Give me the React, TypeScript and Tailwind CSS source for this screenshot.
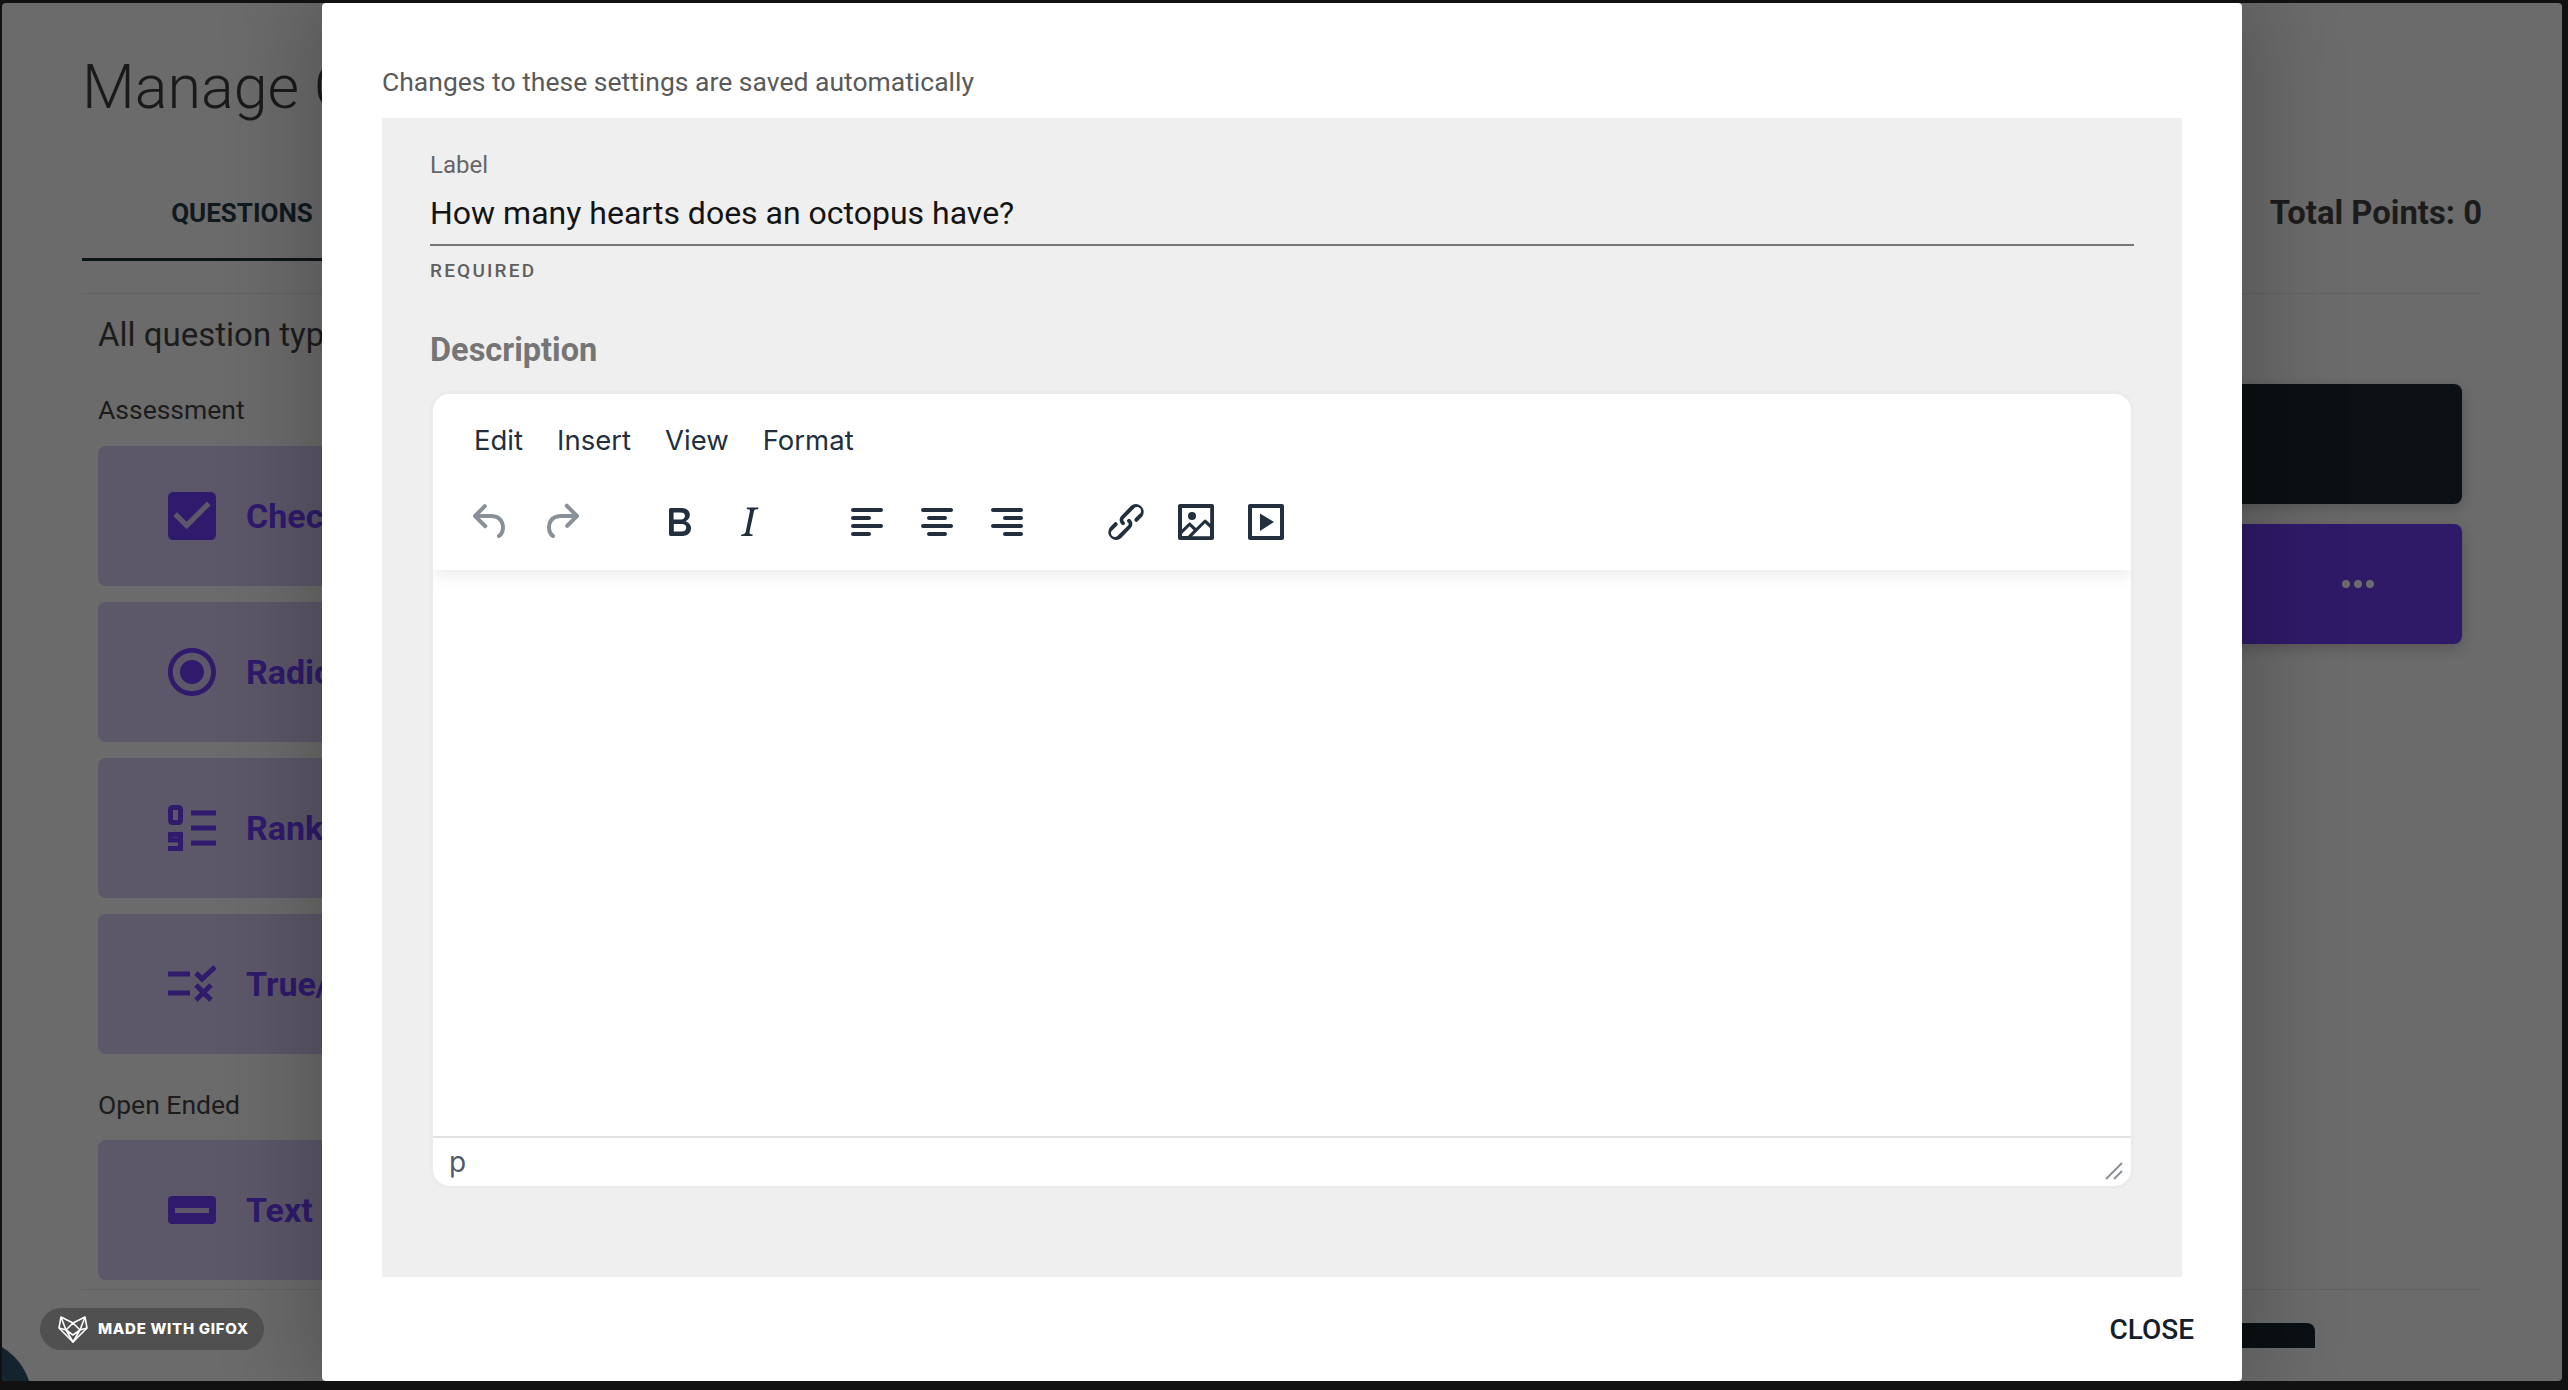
const questionCard = "flex h-[140px] items-center gap-[30px] rounded-lg bg-[#5c5769] pl-[70px]";
const cardLabel = "text-[34px] font-bold text-[#2f1a6c]";

function TinyIcon({ d, className = "" }: { d: string; className?: string }) {
  return (
    <span className={`flex w-[70px] justify-center ${className}`}>
      <svg viewBox="0 0 24 24" className="h-12 w-12 fill-current">
        <path d={d} />
      </svg>
    </span>
  );
}

const icons = {
  undo: "M6.4 8H12c3.7 0 6.2 2 6.8 5.1.6 2.7-.4 5.6-2.3 6.8a1 1 0 0 1-1-1.8c1.1-.6 1.8-2.7 1.4-4.6-.5-2.1-2.1-3.5-4.9-3.5H6.4l3.3 3.3a1 1 0 1 1-1.4 1.4l-5-5a1 1 0 0 1 0-1.4l5-5a1 1 0 0 1 1.4 1.4L6.4 8Z",
  redo: "M17.6 10H12c-2.8 0-4.4 1.4-4.9 3.5-.4 2 .3 4 1.4 4.6a1 1 0 1 1-1 1.8c-2-1.2-2.9-4.1-2.3-6.8.6-3 3-5.1 6.8-5.1h5.6l-3.3-3.3a1 1 0 1 1 1.4-1.4l5 5a1 1 0 0 1 0 1.4l-5 5a1 1 0 0 1-1.4-1.4l3.3-3.3Z",
  bold: "M7.8 19c-.3 0-.5 0-.6-.2l-.2-.5V5.7c0-.2 0-.4.2-.5l.6-.2h5c1.5 0 2.7.3 3.5 1 .7.6 1.1 1.4 1.1 2.5a3 3 0 0 1-.6 1.9c-.4.6-1 1-1.6 1.2.4.1.9.3 1.3.6s.8.7 1 1.2c.4.4.5 1 .5 1.6 0 1.3-.4 2.3-1.3 3-.8.7-2.1 1-3.8 1H7.8Zm5-8.3c.6 0 1.2-.1 1.6-.5.4-.3.6-.7.6-1.3 0-1.1-.8-1.7-2.3-1.7H9.3v3.5h3.4Zm.5 6c.7 0 1.3-.1 1.7-.4.4-.4.6-.9.6-1.5s-.2-1-.7-1.4c-.4-.3-1-.4-2-.4H9.4v3.8h4Z",
  italic: "m16.7 4.7-.1.9h-.3c-.6 0-1 0-1.4.3-.3.3-.4.6-.5 1.1l-2.1 9.8v.6c0 .5.4.8 1.4.8h.2l-.2.8H8l.2-.8h.2c1.1 0 1.8-.5 2-1.5l2-9.8.1-.5c0-.6-.4-.8-1.4-.8h-.3l.2-.9h5.8Z",
  alignLeft: "M5 5h14c.6 0 1 .4 1 1s-.4 1-1 1H5a1 1 0 1 1 0-2Zm0 4h8c.6 0 1 .4 1 1s-.4 1-1 1H5a1 1 0 1 1 0-2Zm0 8h8c.6 0 1 .4 1 1s-.4 1-1 1H5a1 1 0 0 1 0-2Zm0-4h14c.6 0 1 .4 1 1s-.4 1-1 1H5a1 1 0 0 1 0-2Z",
  alignCenter: "M5 5h14c.6 0 1 .4 1 1s-.4 1-1 1H5a1 1 0 1 1 0-2Zm3 4h8c.6 0 1 .4 1 1s-.4 1-1 1H8a1 1 0 1 1 0-2Zm0 8h8c.6 0 1 .4 1 1s-.4 1-1 1H8a1 1 0 0 1 0-2Zm-3-4h14c.6 0 1 .4 1 1s-.4 1-1 1H5a1 1 0 0 1 0-2Z",
  alignRight: "M5 5h14c.6 0 1 .4 1 1s-.4 1-1 1H5a1 1 0 1 1 0-2Zm6 4h8c.6 0 1 .4 1 1s-.4 1-1 1h-8a1 1 0 0 1 0-2Zm0 8h8c.6 0 1 .4 1 1s-.4 1-1 1h-8a1 1 0 0 1 0-2Zm-6-4h14c.6 0 1 .4 1 1s-.4 1-1 1H5a1 1 0 0 1 0-2Z",
  link: "M6.2 12.3a1 1 0 0 1 1.4 1.4l-2 2a2 2 0 1 0 2.6 2.8l4.8-4.8a1 1 0 0 0 0-1.4 1 1 0 1 1 1.4-1.3 2.9 2.9 0 0 1 0 4L9.6 20a3.9 3.9 0 0 1-5.5-5.5l2-2Zm11.6-.6a1 1 0 0 1-1.4-1.4l2-2a2 2 0 1 0-2.6-2.8L11 10.3a1 1 0 0 0 0 1.4A1 1 0 1 1 9.6 13a2.9 2.9 0 0 1 0-4L14.4 4a3.9 3.9 0 0 1 5.5 5.5l-2 2Z",
  image: "m5 15.7 3.3-3.2c.3-.3.7-.3 1 0L12 15l4.1-4c.3-.4.8-.4 1 0l2 1.9V5H5v10.7ZM5 18V19h3l2.8-2.9-2-2L5 17.9Zm14-3-2.5-2.4-6.4 6.5H19v-4ZM4 3h16c.6 0 1 .4 1 1v16c0 .6-.4 1-1 1H4a1 1 0 0 1-1-1V4c0-.6.4-1 1-1Zm6 8a2 2 0 1 1 0-4 2 2 0 0 1 0 4Z",
  media: "M4 3h16c.6 0 1 .4 1 1v16c0 .6-.4 1-1 1H4a1 1 0 0 1-1-1V4c0-.6.4-1 1-1Zm1 2v14h14V5H5Zm4 2.7 7 4.3-7 4.5V7.7Z",
};

function RankIcon() {
  return (
    <svg viewBox="0 0 48 46" className="h-[46px] w-12 fill-none stroke-[#2f1a6c] stroke-[5]">
      <rect x="2.5" y="2.500" width="10" height="15" rx="2" />
      <path d="M12.500 35h-10v-5.500h10v14H0" />
      <path d="M23 8h25M23 23h25M23 38h25" />
    </svg>
  );
}

function TrueFalseIcon() {
  return (
    <svg viewBox="0 0 48 38" className="h-[38px] w-12 fill-none stroke-[#2f1a6c] stroke-[5]">
      <path d="M0 9h22M0 28h22" />
      <path d="m28 8 6 6L47 2" />
      <path d="m28 20 15 15M43 20 28 35" />
    </svg>
  );
}

function TextFieldIcon() {
  return (
    <svg viewBox="0 0 48 28" className="h-7 w-12 fill-[#2f1a6c]">
      <path fillRule="evenodd" d="M4 0h40a4 4 0 0 1 4 4v20a4 4 0 0 1-4 4H4a4 4 0 0 1-4-4V4a4 4 0 0 1 4-4Zm3 12v5h34v-5H7Z" />
    </svg>
  );
}

function FoxLogo() {
  return (
    <svg viewBox="0 0 30 27" className="h-[27px] w-[30px] fill-none stroke-white stroke-[1.6]" strokeLinejoin="round">
      <path d="M3 1 15 7 27 1l2 11-14 14L1 12 3 1Z" />
      <path d="M3 1l5 13 7 12 7-12 5-13M1 12l7 2 7-7 7 7 7-2M8 14l7 5 7-5" />
    </svg>
  );
}

export default function App() {
  return (
    <div className="relative h-[1390px] w-[2568px] overflow-hidden bg-[#111111] pl-[2px] pt-[3px] font-[Roboto,sans-serif]">
      <div className="relative h-[1378px] w-[2560px] overflow-hidden rounded bg-[#6b6b6b] px-[80px] pt-[48px]">
        <h1 className="text-[61px] font-light leading-[72px] text-[#1a1a1a]">Manage Questions</h1>

        <div className="mt-[41px] flex h-[97px] items-center justify-between">
          <div className="flex h-full w-[320px] items-center justify-center border-b-[3px] border-[#0f1416] pt-[5px] text-[26px] font-bold text-[#10191e]">
            QUESTIONS
          </div>
          <div className="pt-[2px] text-[32.8px] font-bold text-[#1c1c1c]">Total Points: 0</div>
        </div>

        <div className="mt-[32px] flex h-[996px] border-t border-[#626262]">
          <div className="w-[600px] pl-4 pt-[21px]">
            <p className="text-[33px] leading-10 text-[#1c1c1c]">All question types</p>
            <p className="mt-[37px] text-[26.5px] leading-9 text-[#1c1c1c]">Assessment</p>
            <div className="mt-[18px] flex flex-col gap-4">
              <div className={questionCard}>
                <svg viewBox="3 3 18 18" className="h-12 w-12 fill-[#2f1a6c]">
                  <path d="M19 3H5c-1.110 0-2 .9-2 2v14c0 1.100.89 2 2 2h14c1.110 0 2-.9 2-2V5c0-1.100-.89-2-2-2zm-9 14l-5-5 1.410-1.410L10 14.170l7.590-7.590L19 8l-9 9z" />
                </svg>
                <span className={cardLabel}>Checkbox</span>
              </div>
              <div className={questionCard}>
                <svg viewBox="2 2 20 20" className="h-12 w-12 fill-[#2f1a6c]">
                  <path d="M12 7c-2.760 0-5 2.240-5 5s2.240 5 5 5 5-2.240 5-5-2.240-5-5-5zm0-5C6.480 2 2 6.480 2 12s4.480 10 10 10 10-4.480 10-10S17.520 2 12 2zm0 18c-4.420 0-8-3.580-8-8s3.580-8 8-8 8 3.580 8 8-3.580 8-8 8z" />
                </svg>
                <span className={cardLabel}>Radio</span>
              </div>
              <div className={questionCard}>
                <RankIcon />
                <span className={cardLabel}>Ranking</span>
              </div>
              <div className={questionCard}>
                <TrueFalseIcon />
                <span className={cardLabel}>True/False</span>
              </div>
            </div>
            <p className="mt-[33px] text-[26.5px] leading-9 text-[#1c1c1c]">Open Ended</p>
            <div className="mt-[17px]">
              <div className={questionCard}>
                <TextFieldIcon />
                <span className={cardLabel}>Text</span>
              </div>
            </div>
          </div>

          <div className="flex flex-1 flex-col gap-5 pr-5 pt-[90px]">
            <div className="h-[120px] rounded-lg bg-[#0a1013] shadow-[0_4px_14px_rgba(0,0,0,0.2)]" />
            <div className="flex h-[120px] items-center justify-end gap-1 rounded-lg bg-[#2f1a68] pr-[88px] shadow-[0_4px_14px_rgba(0,0,0,0.2)]">
              <span className="h-2 w-2 rounded-full bg-[#6b6b6b]" />
              <span className="h-2 w-2 rounded-full bg-[#6b6b6b]" />
              <span className="h-2 w-2 rounded-full bg-[#6b6b6b]" />
            </div>
          </div>
        </div>

        <div className="flex h-[59px] items-start overflow-hidden border-t border-[#626262] pt-[33px]">
          <div className="ml-[1400px] h-[60px] w-[833px] rounded-lg bg-[#0a1013]" />
        </div>

        {/* dialog */}
        <div className="absolute left-[320px] top-0 flex h-[1378px] w-[1920px] flex-col rounded-[4px] bg-white px-[60px] pt-[59px] shadow-[0_0_90px_14px_rgba(0,0,0,0.22)]">
          <p className="text-[26.5px] leading-10 text-[#5a5a5a]">Changes to these settings are saved automatically</p>

          <div className="mt-4 flex h-[1159px] flex-col bg-[#efefef] px-12 pt-[31px]">
            <label className="text-[24px] leading-8 text-[#666666]">Label</label>
            <div className="mt-2 border-b-2 border-[#777777] pb-[7px] text-[32px] leading-12 text-[#141414]">
              How many hearts does an octopus have?
            </div>
            <div className="mt-[13px] text-[19px] font-medium leading-6 tracking-[2.2px] text-[#5f5f5f]">REQUIRED</div>
            <div className="mt-[47px] text-[32.5px] font-bold leading-10 text-[#757575]">Description</div>

            <div className="mt-[21px] flex h-[798px] flex-col overflow-hidden rounded-[20px] border-[3px] border-[#ebebeb] bg-white font-[Inter,sans-serif] text-[#222f3e]">
              <div className="relative h-[176px] bg-white shadow-[0_4px_16px_rgba(0,0,0,0.09)]">
                <div className="flex h-[92px] items-center gap-[34px] pl-[41px] pt-[2px] text-[27.5px]">
                  <span>Edit</span>
                  <span>Insert</span>
                  <span>View</span>
                  <span>Format</span>
                </div>
                <div className="flex pl-[23px] pt-[12px]">
                  <div className="flex text-[#8a9097]">
                    <TinyIcon d={icons.undo} />
                    <TinyIcon d={icons.redo} />
                  </div>
                  <div className="ml-12 flex">
                    <TinyIcon d={icons.bold} />
                    <TinyIcon d={icons.italic} />
                  </div>
                  <div className="ml-12 flex">
                    <TinyIcon d={icons.alignLeft} />
                    <TinyIcon d={icons.alignCenter} />
                    <TinyIcon d={icons.alignRight} />
                  </div>
                  <div className="ml-[49px] flex">
                    <TinyIcon d={icons.link} />
                    <TinyIcon d={icons.image} />
                    <TinyIcon d={icons.media} />
                  </div>
                </div>
              </div>
              <div className="flex-1" />
              <div className="flex h-[50px] items-center justify-between border-t-2 border-[#e2e2e2] pl-4 pr-2 text-[28px] text-[#50586a]">
                <span>p</span>
                <svg viewBox="0 0 18 18" className="mt-[18px] h-[18px] w-[18px] fill-none stroke-[#8d9197] stroke-2">
                  <path d="M1 17 17 1M9 17l8-8" />
                </svg>
              </div>
            </div>
          </div>

          <div className="-mr-3 flex flex-1 items-center justify-end pt-[2px] text-[28px] font-medium text-[#15202b]">CLOSE</div>
        </div>

        {/* recorder watermark */}
        <div className="absolute left-[38px] top-[1305px] flex h-[42px] w-[224px] items-center gap-[10px] rounded-full bg-[#505050] pl-[18px] font-[Inter,sans-serif] text-[15px] font-extrabold tracking-[0.7px] text-white">
          <FoxLogo />
          MADE WITH GIFOX
        </div>
        <div className="absolute -left-[94px] top-[1335px] h-[124px] w-[124px] rounded-full bg-[#14242f]" />
      </div>
    </div>
  );
}
